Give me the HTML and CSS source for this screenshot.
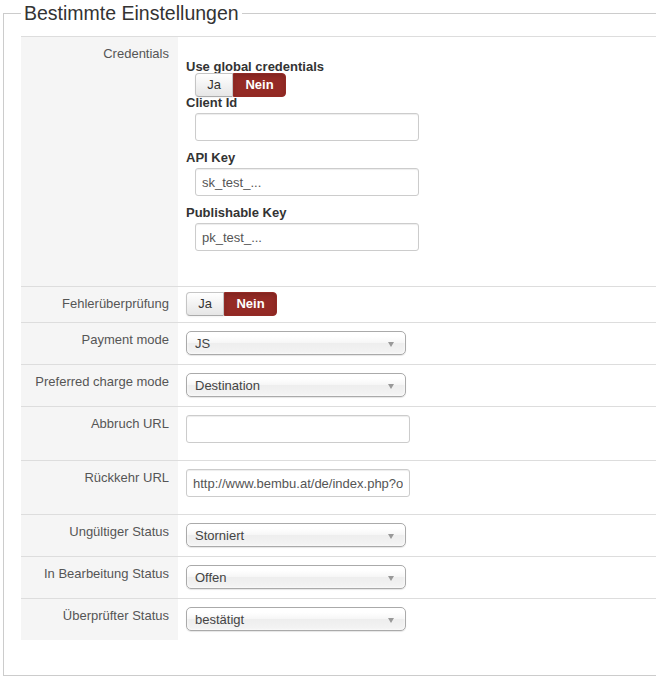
FILE: index.html
```html
<!DOCTYPE html>
<html>
<head>
    <link rel="stylesheet" href="styles.css">
</head>
<body>
    <fieldset class="settings">
        <legend>Bestimmte Einstellungen</legend>
        <table class="params">
            <tr>
                <td class="key">Credentials</td>
                <td class="val">
                    <div class="credentials">
                        <label class="sublabel first">Use global credentials</label>
                        <div class="btn-group indent">
                            <span class="btn">Ja</span>
                            <span class="btn btn-danger">Nein</span>
                        </div>
                        <label class="sublabel tight">Client Id</label>
                        <input type="text" class="field indent" value="">
                        <label class="sublabel">API Key</label>
                        <input type="text" class="field indent" value="sk_test_...">
                        <label class="sublabel">Publishable Key</label>
                        <input type="text" class="field indent" value="pk_test_...">
                    </div>
                </td>
            </tr>
            <tr>
                <td class="key">Fehlerüberprüfung</td>
                <td class="val">
                    <div class="btn-group">
                        <span class="btn">Ja</span>
                        <span class="btn btn-danger">Nein</span>
                    </div>
                </td>
            </tr>
            <tr>
                <td class="key">Payment mode</td>
                <td class="val"><div class="chzn"><span>JS</span><b></b></div></td>
            </tr>
            <tr>
                <td class="key">Preferred charge mode</td>
                <td class="val"><div class="chzn"><span>Destination</span><b></b></div></td>
            </tr>
            <tr>
                <td class="key">Abbruch URL</td>
                <td class="val"><input type="text" class="field url" value=""></td>
            </tr>
            <tr>
                <td class="key">Rückkehr URL</td>
                <td class="val"><input type="text" class="field url" value="http://www.bembu.at/de/index.php?option=com_virtuemart"></td>
            </tr>
            <tr>
                <td class="key">Ungültiger Status</td>
                <td class="val"><div class="chzn"><span>Storniert</span><b></b></div></td>
            </tr>
            <tr>
                <td class="key">In Bearbeitung Status</td>
                <td class="val"><div class="chzn"><span>Offen</span><b></b></div></td>
            </tr>
            <tr>
                <td class="key">Überprüfter Status</td>
                <td class="val"><div class="chzn"><span>bestätigt</span><b></b></div></td>
            </tr>
        </table>
    </fieldset>
</body>
</html>
```

FILE: styles.css
```css
body {
    margin: 0;
    font-family: "Liberation Sans", Arial, Helvetica, sans-serif;
    font-size: 13px;
    line-height: 18px;
    color: #333;
    background: #fff;
}
.settings {
    margin: 0 0 0 3px;
    padding: 9px 0 35px 17px;
    border: 1px solid #ccc;
    border-right: none;
    min-width: 0;
}
.settings legend {
    padding: 0 3px;
    font-size: 19.5px;
    line-height: 27px;
    color: #333;
}
.params {
    width: 100%;
    border-collapse: collapse;
}
.params td {
    border-top: 1px solid #ddd;
    vertical-align: top;
}
.key {
    width: 140px;
    padding: 8px 9px 8px 8px;
    background-color: #f5f5f5;
    color: #555;
    text-align: right;
    white-space: nowrap;
}
.val {
    padding: 5px 8px 6px;
}
.credentials {
    padding-bottom: 20px;
}
.sublabel {
    display: block;
    font-weight: bold;
    line-height: 15px;
    color: #333;
}
.sublabel.first {
    margin-top: 17px;
    margin-bottom: -1px;
}
.sublabel.tight {
    margin-top: -2px;
}
.indent {
    margin-left: 9px;
}
.btn-group {
    display: flex;
    width: max-content;
}
.btn {
    display: block;
    height: 24px;
    box-sizing: border-box;
    line-height: 22px;
    padding: 0;
    border: 1px solid #c5c5c5;
    border-bottom-color: #ababab;
    background: linear-gradient(#ffffff, #e6e6e6);
    color: #333;
    font-size: 13px;
    text-align: center;
    box-shadow: inset 0 1px 0 rgba(255, 255, 255, 0.2), 0 1px 2px rgba(0, 0, 0, 0.05);
}
.btn:first-child {
    border-radius: 4px 0 0 4px;
    width: 38px;
}
.btn-danger {
    width: 53px;
    border-color: #942a25;
    border-radius: 0 4px 4px 0;
    background: #942a25;
    color: #fff;
    font-weight: bold;
    box-shadow: inset 0 2px 4px rgba(0, 0, 0, 0.15);
}
.field {
    display: block;
    width: 224px;
    height: 28px;
    box-sizing: border-box;
    margin: 3px 0 9px 9px;
    padding: 4px 6px;
    border: 1px solid #ccc;
    border-radius: 3px;
    box-shadow: inset 0 1px 1px rgba(0, 0, 0, 0.075);
    font-family: inherit;
    font-size: 13px;
    color: #555;
    background: #fff;
    outline: none;
}
.field.url {
    margin: 3px 0 11px 0;
}
.chzn {
    position: relative;
    width: 220px;
    height: 24px;
    box-sizing: border-box;
    margin: 3px 0;
    padding: 0 8px;
    border: 1px solid #aaa;
    border-radius: 5px;
    background: linear-gradient(#ffffff 20%, #f6f6f6 50%, #eeeeee 52%, #f4f4f4 100%);
    box-shadow: inset 0 0 3px #fff, 0 1px 1px rgba(0, 0, 0, 0.1);
    line-height: 24px;
    color: #444;
}
.chzn b {
    position: absolute;
    right: 11px;
    top: 10px;
    width: 0;
    height: 0;
    border-left: 3px solid transparent;
    border-right: 3px solid transparent;
    border-top: 5px solid #999;
}
```
